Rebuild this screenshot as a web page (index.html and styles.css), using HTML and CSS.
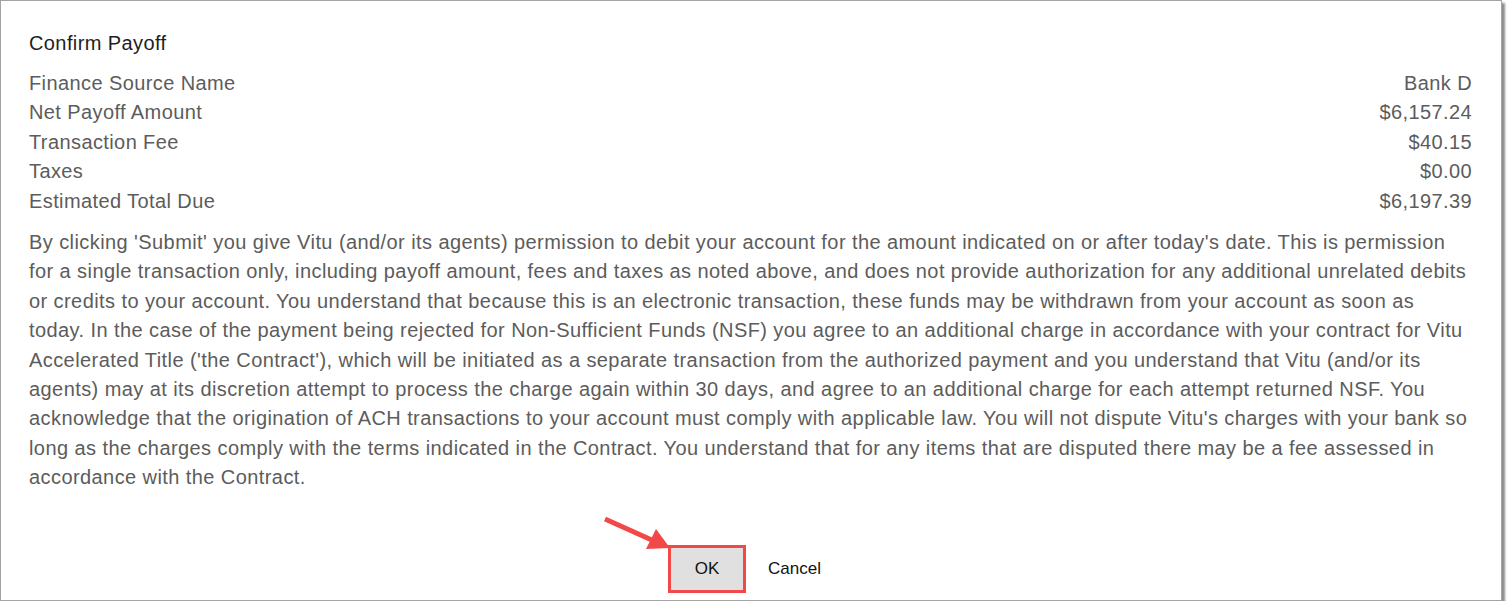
FILE: index.html
```html
<!DOCTYPE html>
<html lang="en">

<head>
    <meta charset="UTF-8">
    <meta name="viewport" content="width=device-width, initial-scale=1.0">
    <title>Confirm Payoff</title>
    <link rel="stylesheet" href="styles.css">
</head>

<body>
    <div class="dialog">
        <h3 class="title">Confirm Payoff</h3>
        <div class="rows">
            <div class="row"><span>Finance Source Name</span><span>Bank D</span></div>
            <div class="row"><span>Net Payoff Amount</span><span>$6,157.24</span></div>
            <div class="row"><span>Transaction Fee</span><span>$40.15</span></div>
            <div class="row"><span>Taxes</span><span>$0.00</span></div>
            <div class="row"><span>Estimated Total Due</span><span>$6,197.39</span></div>
        </div>
        <p class="terms">By clicking 'Submit' you give Vitu (and/or its agents) permission to debit your account for the amount indicated on or after today's date. This is permission for a single transaction only, including payoff amount, fees and taxes as noted above, and does not provide authorization for any additional unrelated debits or credits to your account. You understand that because this is an electronic transaction, these funds may be withdrawn from your account as soon as today. In the case of the payment being rejected for Non-Sufficient Funds (NSF) you agree to an additional charge in accordance with your contract for Vitu Accelerated Title ('the Contract'), which will be initiated as a separate transaction from the authorized payment and you understand that Vitu (and/or its agents) may at its discretion attempt to process the charge again within 30 days, and agree to an additional charge for each attempt returned NSF. You acknowledge that the origination of ACH transactions to your account must comply with applicable law. You will not dispute Vitu's charges with your bank so long as the charges comply with the terms indicated in the Contract. You understand that for any items that are disputed there may be a fee assessed in accordance with the Contract.</p>
        <div class="actions">
            <span class="highlight">
                <svg class="arrow" width="72" height="36" viewBox="0 0 72 36">
                    <line x1="3" y1="3" x2="52" y2="25" stroke="#f24848" stroke-width="5" />
                    <polygon points="68,32 44,33 54,13" fill="#f24848" />
                </svg>
                <button class="btn-ok">OK</button>
            </span>
            <button class="btn-cancel">Cancel</button>
        </div>
    </div>
</body>

</html>
```

FILE: styles.css
```css
body {
    margin: 0;
    background-color: #fff;
    font-family: "Liberation Sans", Arial, sans-serif;
}

.dialog {
    box-sizing: border-box;
    width: 1502px;
    height: 601px;
    border: 1px solid #a3a3a3;
    box-shadow: 3px 3px 2px #8f8f8f;
    padding: 27px 29px 0 28px;
}

.title {
    margin: 0;
    font-size: 20px;
    font-weight: normal;
    line-height: 30px;
    color: #1e1e1e;
    letter-spacing: 0.4px;
}

.rows {
    margin-top: 11px;
}

.row {
    display: flex;
    justify-content: space-between;
    font-size: 20px;
    line-height: 29.4px;
    color: #5c5c5c;
    letter-spacing: 0.4px;
}

.terms {
    margin: 12px 0 0;
    font-size: 20px;
    line-height: 29.4px;
    color: #5c5c5c;
    letter-spacing: 0.42px;
}

.actions {
    display: flex;
    justify-content: center;
    align-items: center;
    gap: 22px;
    margin-top: 52px;
    padding-right: 12px;
}

.highlight {
    position: relative;
    display: inline-block;
    border: 3px solid #f24848;
}

.arrow {
    position: absolute;
    left: -69px;
    top: -32px;
}

.btn-ok {
    display: block;
    width: 72px;
    height: 42px;
    border: none;
    background-color: #e0e0e0;
    font-family: "Liberation Sans", Arial, sans-serif;
    font-size: 17px;
    color: #111;
    cursor: pointer;
}

.btn-cancel {
    border: none;
    background: none;
    font-family: "Liberation Sans", Arial, sans-serif;
    font-size: 17px;
    color: #111;
    padding: 0;
    cursor: pointer;
}
```
